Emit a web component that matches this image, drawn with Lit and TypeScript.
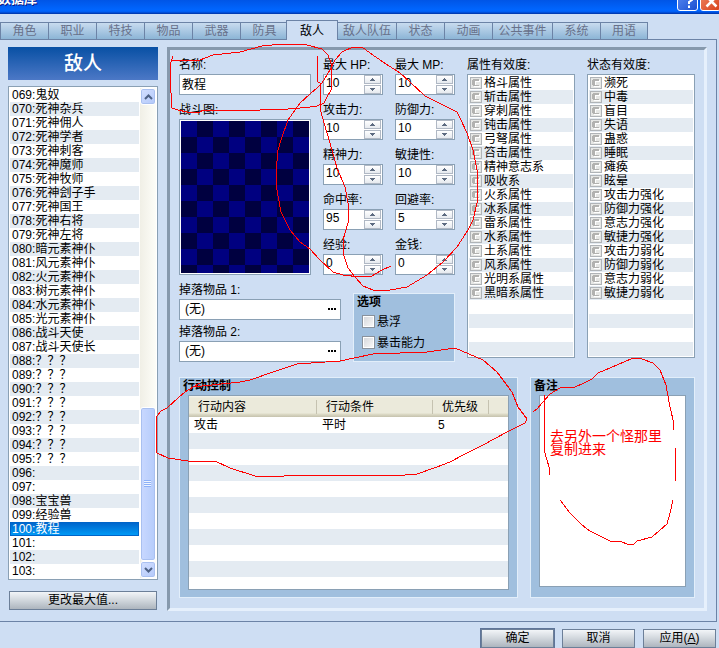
import { LitElement, html, css, svg } from "lit";
import { customElement, property, state } from "lit/decorators.js";
import { classMap } from "lit/directives/class-map.js";

const TABS = ["角色", "职业", "特技", "物品", "武器", "防具", "敌人", "敌人队伍", "状态", "动画", "公共事件", "系统", "用语"];

const FIRST_ID = 69;
const ENEMIES = [
  "鬼奴", "死神杂兵", "死神佣人", "死神学者", "死神刺客", "死神魔师", "死神牧师", "死神刽子手",
  "死神国王", "死神右将", "死神左将", "暗元素神仆", "风元素神仆", "火元素神仆", "树元素神仆",
  "水元素神仆", "光元素神仆", "战斗天使", "战斗天使长", "？？？", "？？？", "？？？", "？？？",
  "？？？", "？？？", "？？？", "？？？", "", "", "宝宝兽", "经验兽", "教程", "", "", "",
];

const STATS: [string, string][] = [
  ["最大 HP:", "10"], ["最大 MP:", "10"],
  ["攻击力:", "10"], ["防御力:", "10"],
  ["精神力:", "10"], ["敏捷性:", "10"],
  ["命中率:", "95"], ["回避率:", "5"],
  ["经验:", "0"], ["金钱:", "0"],
];

const ELEMENTS = [
  "格斗属性", "斩击属性", "穿刺属性", "钝击属性", "弓弩属性", "笞击属性", "精神意志系", "吸收系",
  "火系属性", "冰系属性", "雷系属性", "水系属性", "土系属性", "风系属性", "光明系属性", "黑暗系属性",
];

const STATES = [
  "濒死", "中毒", "盲目", "失语", "蛊惑", "睡眠", "瘫痪", "眩晕",
  "攻击力强化", "防御力强化", "意志力强化", "敏捷力强化",
  "攻击力弱化", "防御力弱化", "意志力弱化", "敏捷力弱化",
];

/* Freehand red pen strokes laid over the dialog. */
const STROKES = [
  "173,56 171,62 170,67 171,93 172,108 178,110 187,112 200,112 203,110 260,110 288,109 300,108 310,107 317,106 324,103 327,97 331,90 332,77 331,63 328,55 322,49 307,45 283,44 262,46 240,52 213,55 200,60 172,61",
  "317,56 318,82 320,83 321,112 327,133 332,150 337,168 345,187 348,203 348,223 343,240 343,253 348,268 355,277 363,286 373,290 390,290 407,287 427,275 443,262 457,247 468,230 473,220 477,203 477,170 473,150 467,133 460,118 457,112 443,105 425,96 410,82 400,73 383,62 370,53 362,47 353,47 342,52 335,60 330,70 322,83 317,88 310,94 300,103 288,120 282,137 278,150 276,173 277,190 281,212 290,230 300,242 310,249 320,260 333,272 343,275 360,277 372,276 380,271 391,266",
  "200,383 188,390 185,392 178,398 167,408 161,411 157,416 156,430 157,453 168,458 188,461 215,461 230,468 258,477 310,475 405,475 417,474 437,467 450,462 465,454 483,445 507,432 525,423 527,419 518,407 512,392 497,372 483,360 455,348 427,352 373,354 340,361 297,364 273,372 250,380 240,382 193,387",
  "533,412 537,409 543,402 550,394 560,388 575,387 584,383 592,379 598,373 617,365 633,358 642,359 653,363 660,370 666,385 669,402 673,420 673,430",
  "675,448 675,481",
  "544,395 544,450 547,460 549,467 549,475",
  "560,500 570,513 582,525 590,531 610,541 622,542 627,544 634,544 637,541 652,537 667,524 670,513 673,500",
];

const shared = css`
  * { box-sizing: border-box; }
  button, input, textarea { font: inherit; color: inherit; margin: 0; border-radius: 0; outline: none; }
  ul { list-style: none; margin: 0; padding: 0; }
  svg { display: block; }
`;

@customElement("spin-field")
class SpinField extends LitElement {
  @property() label = "";
  @property() value = "";
  static styles = [shared, css`
    :host { display: block; min-width: 0; }
    .label { display: block; height: 16px; line-height: 14px; white-space: nowrap; }
    .box { display: flex; height: 21px; padding-right: 1px; border: 1px solid #8aa0b4; background: #fff; }
    .value { flex: 1; min-width: 0; width: 0; border: 0; background: none; padding: 0 0 3px 2px; }
    .arrows { display: grid; gap: 1px; width: 17px; }
    .arrow { display: grid; place-items: center; padding: 0; border: 1px solid #b0b8c4; background: linear-gradient(#fff, #e6eaef); }
  `];
  render() {
    return html`
      <label class="label" for="v">${this.label}</label>
      <div class="box">
        <input id="v" class="value" type="text" .value=${this.value} />
        <span class="arrows">
          <button class="arrow" aria-label="增加"><svg width="5" height="3"><path d="M2 0h1v1h1v1h1v1H0V2h1V1h1z" fill="#5d6b80" /></svg></button>
          <button class="arrow" aria-label="减少"><svg width="5" height="3"><path d="M0 0h5v1H4v1H3v1H2V2H1V1H0z" fill="#5d6b80" /></svg></button>
        </span>
      </div>`;
  }
}

@customElement("rank-list")
class RankList extends LitElement {
  @property() label = "";
  @property({ attribute: false }) items: string[] = [];
  static styles = [shared, css`
    :host { display: flex; flex-direction: column; min-width: 0; }
    .label { height: 16px; line-height: 14px; white-space: nowrap; }
    .frame { height: 284px; padding: 1px; border: 1px solid #8aa0b4; background: #fff; overflow: hidden; }
    .rows { height: 100%; background: repeating-linear-gradient(#fff 0 14px, #e4ebf2 14px 28px); }
    .row { display: flex; align-items: center; gap: 2px; height: 14px; line-height: 14px; padding-left: 1px; white-space: nowrap; }
    .rank { display: block; padding: 0; border: 0; background: none; }
  `];
  render() {
    return html`
      <span class="label" id="l">${this.label}</span>
      <div class="frame">
        <ul class="rows" aria-labelledby="l">
          ${this.items.map((t) => html`
            <li class="row">
              <button class="rank" aria-label="C">
                <svg width="12" height="12" shape-rendering="crispEdges">
                  <rect x=".5" y=".5" width="11" height="11" fill="#e6e7e5" stroke="#b0b4b8" />
                  <path d="M4 3h6v2H6v4h4v1H4V9H3V4h1z" fill="#fff" />
                  <path d="M3 2h6v2H5v4h4v1H3V8H2V3h1z" fill="#b2b2b0" />
                </svg>
              </button>${t}
            </li>`)}
        </ul>
      </div>`;
  }
}

@customElement("app-root")
class AppRoot extends LitElement {
  @state() private tab = "敌人";
  @state() private selected = 100;

  static styles = [shared, css`
    :host {
      display: block; position: relative; overflow: hidden; min-height: 100vh;
      background: #cedef3; color: #000;
      font: 12px/14px "Liberation Sans", "Noto Sans CJK SC", sans-serif;
    }
    .titlebar {
      display: flex; justify-content: space-between; height: 14px; overflow: hidden;
      background: linear-gradient(#0055e6 0, #0066ff 10px, #005cf0 12px, #0040c0 13px, #0036a8 14px);
    }
    .caption { margin: -11px 0 0 -2px; font-size: 13px; line-height: 20px; font-weight: 700; color: #fff; text-shadow: 1px 1px #0a1883; white-space: nowrap; }
    .winbtns { display: flex; gap: 2px; margin: -10px -2px 0 0; }
    .winbtn { display: grid; place-items: center; width: 21px; height: 21px; padding: 0; border: 1px solid #fff; border-radius: 3px; background: linear-gradient(135deg, #5a8cf5, #1c4fd0); }
    .winbtn.close { background: linear-gradient(135deg, #f08a68, #d8401a); }

    .tabs { display: flex; align-items: flex-end; height: 25px; }
    .tab {
      flex: none; width: 48px; height: 17px; padding: 0; border: 1px solid #6c83a6; border-right-width: 0; border-bottom: 0;
      line-height: 16px; text-align: center; color: #68718a; white-space: nowrap;
      background: linear-gradient(#c8dbef, #8cb5d6);
    }
    .tab.wide { width: 60px; }
    .tab.active { width: 52px; height: 20px; margin: 0 -1px -1px -2px; border-right-width: 1px; background: #cedef3; color: #000; z-index: 1; }
    .tab.after { width: 59px; }
    .tab:last-child { border-right-width: 1px; }

    .page {
      display: grid; grid-template-columns: 150px minmax(0, 1fr); gap: 9px;
      margin-right: 2px; padding: 7px 9px 10px 8px;
      border: 1px solid #6c83a6; border-left: 0;
    }
    .side { display: flex; flex-direction: column; }
    .banner { height: 33px; margin: 0 0 6px; font-size: 19px; line-height: 33px; font-weight: 500; text-align: center; color: #fff; background: linear-gradient(#0850a4, #4c78c6); }
    .enemies { display: flex; gap: 1px; padding: 1px; border: 1px solid #8aa0b4; background: #fff; }
    .names { flex: 1; min-width: 0; }
    .name { height: 14px; padding-left: 2px; white-space: nowrap; cursor: default; }
    .name:nth-child(even) { background: #e4ebf2; }
    .name.on { background: linear-gradient(#0066cc, #0099f5); color: #fff; border: 1px solid #0064c8; line-height: 12px; padding-left: 1px; }
    .scroll { display: flex; flex-direction: column; width: 16px; background: linear-gradient(90deg, #f0efe6, #fdfdf8); }
    .sbtn { display: grid; place-items: center; flex: none; height: 17px; padding: 0; border: 1px solid #fff; border-radius: 3px; background: linear-gradient(135deg, #d4e0ff, #b2c8fa); box-shadow: inset 0 0 0 1px #a9c0f0; }
    .track { flex: 1; display: flex; flex-direction: column; justify-content: flex-end; }
    .thumb { display: grid; place-items: center; height: 154px; border: 1px solid #fff; border-radius: 3px; background: linear-gradient(90deg, #c9d8ff, #b5ccfb); box-shadow: inset 0 0 0 1px #a9c0f0; }
    .btn { height: 19px; padding: 0; border: 1px solid #6c7f98; line-height: 15px; background: linear-gradient(#f2f5f8, #d0d6dc 50%, #adb5be); white-space: nowrap; }
    .side .btn { margin: 11px 1px 0; }

    .panel {
      display: flex; flex-direction: column; gap: 15px; padding: 8px 9px 10px;
      border: 3px solid; border-color: #8699ad #e6f0fc #e6f0fc #8699ad;
    }
    .upper { display: grid; grid-template-columns: 276fr 108fr 108fr; gap: 12px; }
    .basic { display: flex; flex-direction: column; gap: 8px; min-width: 0; }
    .general { display: grid; grid-template-columns: 132fr 132fr; gap: 12px; }
    .stats { display: grid; grid-template-columns: 1fr 1fr; gap: 8px 12px; }
    .label { display: block; height: 16px; line-height: 14px; white-space: nowrap; }
    .text { display: block; width: 100%; height: 21px; padding: 0 0 3px 2px; border: 1px solid #8aa0b4; background: #fff; }
    .graphic { margin-top: 8px; }
    .canvas { display: block; width: 100%; height: 156px; padding: 1px; border: 1px solid #8aa0b4; background: #fff; }
    .checker { display: block; height: 100%; background: repeating-conic-gradient(#000040 0 25%, #000080 0 50%) 0 0 / 32px 32px; }
    .extra { display: grid; grid-template-columns: 162fr 102fr; gap: 12px; align-items: end; }
    .drops { display: grid; gap: 5px; }
    .drop { display: flex; justify-content: space-between; align-items: center; width: 100%; height: 21px; padding: 0 3px 1px 5px; border: 1px solid #8aa0b4; background: #fff; text-align: left; }
    .group { min-width: 0; margin: 0; border: 1px solid #e2eefa; background: #a0bfde; }
    .title { margin: 0; font-size: 12px; font-weight: 700; line-height: 17px; height: 17px; padding-left: 3px; }
    .options { height: 69px; }
    .check { display: flex; align-items: center; gap: 2px; height: 21px; padding-left: 8px; white-space: nowrap; }
    .check input { appearance: none; width: 13px; height: 13px; border: 1px solid #8a929c; background: linear-gradient(135deg, #d4d6da, #fafafa); box-shadow: inset 0 0 0 1px #fff; }

    .lower { display: grid; grid-template-columns: 339fr 165fr; gap: 12px; }
    .lower .group { height: 221px; padding: 0 8px; }
    .lower .title { margin-left: -8px; }
    .frame { height: 195px; border: 1px solid #8aa0b4; background: #fff; overflow: hidden; }
    .actions { width: 100%; table-layout: fixed; border-collapse: collapse; }
    .actions th { height: 21px; padding: 0 0 0 9px; font-weight: 400; text-align: left; white-space: nowrap; background: linear-gradient(#f6f5ee 0, #ebeadb 2px, #ebeadb 17px, #dedcc8 18px, #c5c2ad 21px); }
    .cell { display: block; height: 14px; line-height: 14px; border-right: 1px solid #c5c2b0; }
    .actions td { height: 16px; padding: 0 0 0 5px; line-height: 16px; }
    .actions tbody tr:nth-child(even) { background: #e4ebf2; }
    .c1 { width: 128px; } .c2 { width: 116px; } .c3 { width: 56px; }
    .memo { display: block; width: 100%; height: 192px; padding: 2px; border: 1px solid #8aa0b4; background: #fff; resize: none; }

    .footer { display: flex; justify-content: flex-end; gap: 8px; padding: 7px 3px 0 0; }
    .footer .btn { width: 73px; }
    .btn.default { outline: 1px solid #5f7599; }

    .ink { position: absolute; left: 0; top: 0; pointer-events: none; }
    .ink polyline { fill: none; stroke: #f00; stroke-width: 1; }
    .inknote { position: absolute; left: 550px; top: 430px; margin: 0; font-size: 14px; line-height: 13px; color: #f00; white-space: nowrap; pointer-events: none; }
  `];

  private tabClass(t: string, i: number) {
    return classMap({
      tab: true,
      active: t === this.tab,
      wide: t.length === 4,
      after: TABS[i - 1] === this.tab,
    });
  }

  render() {
    return html`
      <header class="titlebar">
        <span class="caption">数据库</span>
        <span class="winbtns">
          <button class="winbtn" aria-label="帮助"><svg width="21" height="21" viewBox="0 0 21 21"><path d="M7 8V6l2-2h3l2 2v3l-3 2v2M11 14.500v2.500" fill="none" stroke="#fff" stroke-width="2" /></svg></button>
          <button class="winbtn close" aria-label="关闭"><svg width="21" height="21" viewBox="0 0 21 21"><path d="M5.500 5.500l10 10M15.500 5.500l-10 10" stroke="#fff" stroke-width="2.500" /></svg></button>
        </span>
      </header>
      <nav class="tabs" role="tablist">
        ${TABS.map((t, i) => html`<button role="tab" class=${this.tabClass(t, i)} @click=${() => (this.tab = t)}>${t}</button>`)}
      </nav>
      <main class="page">
        <section class="side">
          <h1 class="banner">敌人</h1>
          <div class="enemies">
            <ul class="names" role="listbox" aria-label="敌人">
              ${ENEMIES.map((n, i) => {
                const id = FIRST_ID + i;
                return html`<li role="option" aria-selected=${id === this.selected} class=${classMap({ name: true, on: id === this.selected })}
                  @click=${() => (this.selected = id)}>${String(id).padStart(3, "0")}:${n}</li>`;
              })}
            </ul>
            <div class="scroll">
              <button class="sbtn" aria-label="上移"><svg width="9" height="6"><path d="M1 5l3.500-3.500L8 5" fill="none" stroke="#4d6185" stroke-width="2" /></svg></button>
              <div class="track"><div class="thumb"><svg width="8" height="8"><path d="M0 .5h7M0 2.500h7M0 4.500h7M0 6.500h7" stroke="#8cb0f8" /><path d="M0 1.500h7M0 3.500h7M0 5.500h7" stroke="#eef4fe" /></svg></div></div>
              <button class="sbtn" aria-label="下移"><svg width="9" height="6"><path d="M1 1l3.500 3.500L8 1" fill="none" stroke="#4d6185" stroke-width="2" /></svg></button>
            </div>
          </div>
          <button class="btn">更改最大值...</button>
        </section>

        <section class="panel">
          <div class="upper">
            <div class="basic">
              <div class="general">
                <div>
                  <label class="label" for="name">名称:</label>
                  <input class="text" id="name" type="text" value="教程" />
                  <div class="graphic">
                    <span class="label" id="gl">战斗图:</span>
                    <button class="canvas" aria-labelledby="gl"><span class="checker"></span></button>
                  </div>
                </div>
                <div class="stats">
                  ${STATS.map(([l, v]) => html`<spin-field .label=${l} .value=${v}></spin-field>`)}
                </div>
              </div>
              <div class="extra">
                <div class="drops">
                  ${[1, 2].map((n) => html`
                    <div>
                      <label class="label" for="drop${n}">掉落物品 ${n}:</label>
                      <button class="drop" id="drop${n}"><span>(无)</span>
                        <svg width="9" height="2"><path d="M0 1h2M3 1h2M6 1h2" stroke="#000" stroke-width="2" /></svg></button>
                    </div>`)}
                </div>
                <section class="group options">
                  <h2 class="title">选项</h2>
                  <label class="check"><input type="checkbox" />悬浮</label>
                  <label class="check"><input type="checkbox" />暴击能力</label>
                </section>
              </div>
            </div>
            <rank-list label="属性有效度:" .items=${ELEMENTS}></rank-list>
            <rank-list label="状态有效度:" .items=${STATES}></rank-list>
          </div>

          <div class="lower">
            <section class="group">
              <h2 class="title">行动控制</h2>
              <div class="frame">
                <table class="actions">
                  <thead><tr>
                    <th class="c1"><span class="cell">行动内容</span></th>
                    <th class="c2"><span class="cell">行动条件</span></th>
                    <th class="c3"><span class="cell">优先级</span></th>
                    <th></th>
                  </tr></thead>
                  <tbody>
                    <tr><td>攻击</td><td>平时</td><td>5</td><td></td></tr>
                    ${Array.from({ length: 9 }, () => html`<tr><td></td><td></td><td></td><td></td></tr>`)}
                  </tbody>
                </table>
              </div>
            </section>
            <section class="group">
              <h2 class="title" id="memo">备注</h2>
              <textarea class="memo" aria-labelledby="memo"></textarea>
            </section>
          </div>
        </section>
      </main>
      <footer class="footer">
        <button class="btn default">确定</button>
        <button class="btn">取消</button>
        <button class="btn">应用(<u>A</u>)</button>
      </footer>
      <svg class="ink" width="719" height="648" shape-rendering="crispEdges" aria-hidden="true">
        ${STROKES.map((p) => svg`<polyline points=${p} />`)}
      </svg>
      <p class="inknote">去另外一个怪那里<br />复制进来</p>`;
  }
}
